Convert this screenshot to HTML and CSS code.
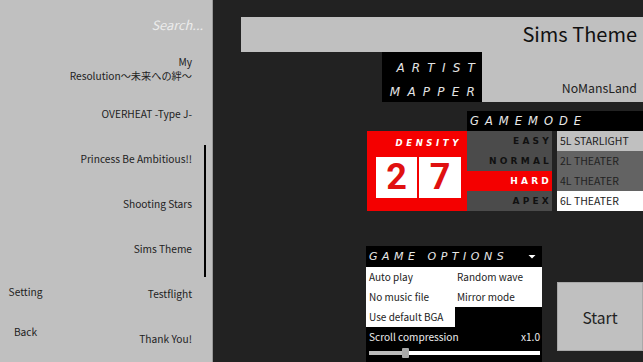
FILE: index.html
```html
<!DOCTYPE html>
<html>
<head>
<meta charset="utf-8">
<link rel="stylesheet" href="styles.css">
</head>
<body>
<div class="app">
  <aside class="sidebar">
    <div class="search">Search...</div>
    <div class="side-body">
      <nav class="nav">
        <div class="nav-item setting">Setting</div>
        <div class="nav-item back">Back</div>
      </nav>
      <ul class="songs">
        <li>My<br>Resolution〜未来への絆〜</li>
        <li>OVERHEAT -Type J-</li>
        <li>Princess Be Ambitious!!</li>
        <li>Shooting Stars</li>
        <li>Sims Theme</li>
        <li>Testflight</li>
        <li>Thank You!</li>
      </ul>
    </div>
    <div class="scroll-thumb"></div>
  </aside>
  <main class="main">
    <div class="title-bar">Sims Theme</div>
    <div class="artist-row">
      <div class="labels">
        <span>ARTIST</span>
        <span>MAPPER</span>
      </div>
      <div class="artist-val">NoMansLand</div>
    </div>
    <div class="mode-grid">
      <div class="gm-head">GAMEMODE</div>
      <div class="density">
        <div class="density-label">DENSITY</div>
        <div class="digits"><span>2</span><span>7</span></div>
      </div>
      <div class="diff">EASY</div><div class="chart easy">5L STARLIGHT</div>
      <div class="diff">NORMAL</div><div class="chart mid">2L THEATER</div>
      <div class="diff hard">HARD</div><div class="chart mid">4L THEATER</div>
      <div class="diff">APEX</div><div class="chart apex">6L THEATER</div>
    </div>
    <div class="bottom-row">
      <section class="options">
        <div class="opt-head"><span>GAME OPTIONS</span>
          <svg class="chev" width="8" height="6" viewBox="0 0 8 6"><path d="M0.5 1 L4 4.5 L7.5 1 Z" fill="#fff"/></svg>
        </div>
        <div class="opt-grid">
          <div class="opt">Auto play</div>
          <div class="opt">Random wave</div>
          <div class="opt">No music file</div>
          <div class="opt">Mirror mode</div>
          <div class="opt single">Use default BGA</div>
        </div>
        <div class="scroll-row"><span>Scroll compression</span><span>x1.0</span></div>
        <div class="slider"><div class="thumb"></div></div>
      </section>
      <button class="start">Start</button>
    </div>
  </main>
</div>
</body>
</html>
```
FILE: styles.css
```css
* { box-sizing: border-box; }
html, body { margin: 0; padding: 0; }
body {
  width: 643px; height: 362px; overflow: hidden;
  background: #222222;
  font-family: "Noto Sans CJK JP", "Noto Sans", sans-serif;
}
.app { display: flex; height: 362px; }
.sidebar {
  position: relative;
  width: 213px; flex: none;
  background: #c0c0c0;
  border-right: 1px solid #9a9a9a;
  color: #222;
}
.search {
  height: 46px;
  padding: 14px 9px 0 0;
  text-align: right;
  font-style: italic;
  font-size: 12.8px;
  color: #ececec;
  line-height: 22px;
}
.side-body { display: flex; }
.nav {
  width: 51px; flex: none;
  display: flex; flex-direction: column; align-items: center;
  padding-top: 238px; gap: 25px;
  font-size: 10.2px;
}
.nav-item { line-height: 15px; white-space: nowrap; }
.songs {
  list-style: none; margin: 0; padding: 0 20px 0 0;
  flex: 1;
  text-align: right;
  font-size: 10.2px;
  line-height: 14px;
}
.songs li {
  height: 45px;
  display: flex; align-items: center; justify-content: flex-end;
}
.scroll-thumb {
  position: absolute; left: 204px; top: 145px;
  width: 2px; height: 132px; background: #000;
}
.main { flex: 1; display: flex; flex-direction: column; }
.title-bar {
  margin: 17px 0 0 28px;
  height: 35px;
  background: #c0c0c0;
  text-align: right;
  padding-right: 6px;
  font-size: 20px;
  line-height: 34px;
  color: #111;
}
.artist-row { display: flex; margin-left: 169px; height: 50px; }
.labels {
  width: 100px; background: #000;
  display: flex; flex-direction: column; align-items: flex-end;
  padding: 4px 0 0 0;
  font-family: "DejaVu Sans", sans-serif;
  font-style: italic;
  font-size: 12px;
  letter-spacing: 7.2px;
  color: #e4e4e4;
  line-height: 24px;
}
.artist-val {
  flex: 1; background: #c0c0c0;
  text-align: right; padding: 27px 6px 0 0;
  font-size: 12.3px; line-height: 18px; color: #222;
}
.mode-grid {
  margin: 9px 0 0 154px;
  display: grid;
  grid-template-columns: 100px 85px 5px 86px;
  grid-template-rows: 20px repeat(4, 20px);
}
.gm-head {
  grid-column: 2 / 5; grid-row: 1;
  background: #000; color: #e8e8e8;
  font-family: "DejaVu Sans", sans-serif;
  font-style: italic; font-size: 11.5px;
  letter-spacing: 6px; line-height: 20px;
  padding-left: 3px; white-space: nowrap;
}
.density {
  grid-column: 1; grid-row: 2 / 6;
  background: #f40000;
  display: flex; flex-direction: column;
  padding: 7px 0 0 9px;
}
.density-label {
  font-family: "DejaVu Sans", sans-serif;
  font-style: italic; font-weight: bold;
  font-size: 8.5px; letter-spacing: 3.6px;
  color: #fff; text-align: right; padding-right: 5px;
  line-height: 11px;
}
.digits { display: flex; gap: 2px; margin-top: 8px; }
.digits span {
  width: 41px; height: 41px; background: #fff;
  color: #e01010; font-family: "Roboto", sans-serif; font-weight: 700;
  font-size: 36px; line-height: 41px; text-align: center;
}
.digits span + span { width: 42px; }
.diff {
  grid-column: 2;
  background: #4b4b4b;
  text-align: right; padding-right: 0;
  font-family: "DejaVu Sans", sans-serif; font-weight: bold;
  font-size: 9px; letter-spacing: 3.2px;
  line-height: 20px; color: #111; white-space: nowrap;
}
.diff.hard { background: #f40000; color: #fff; }
.chart {
  grid-column: 4;
  font-size: 10.5px; line-height: 20px; padding-left: 3px; color: #222;
  white-space: nowrap;
}
.chart.easy { background: #c0c0c0; }
.chart.mid { background: #636363; }
.chart.apex { background: #fff; }
.bottom-row { display: flex; margin: 35px 0 0 153px; align-items: flex-start; }
.options { width: 176px; height: 116px; background: #000; }
.opt-head {
  height: 21px; display: flex; align-items: center; justify-content: space-between;
  padding: 0 6px 0 3px;
  font-family: "DejaVu Sans", sans-serif; white-space: nowrap;
  font-style: italic; font-size: 11px; letter-spacing: 4.5px; color: #e8e8e8;
}
.chev { margin-top: 1px; }
.opt-grid { display: grid; grid-template-columns: 88px 88px; }
.opt {
  background: #fff; height: 20px; line-height: 20px; white-space: nowrap;
  font-size: 10px; color: #222; padding-left: 3px;
}
.opt.single { grid-column: 1; width: 89px; }
.scroll-row {
  display: flex; justify-content: space-between;
  padding: 0 2px 0 3px;
  color: #eee; font-size: 10.1px; line-height: 20px;
}
.slider {
  position: relative;
  margin: 4px 2px 0 3px; height: 4px; background: #fff;
}
.slider::before {
  content: ""; position: absolute; left: 0; top: 0; width: 34px; height: 4px; background: #bbb;
}
.thumb {
  position: absolute; left: 33px; top: -3px; width: 7px; height: 10px; background: #aaa; border-radius: 1px;
}
.start {
  margin: 36px 0 0 15px;
  width: 86px; height: 69px;
  background: #c0c0c0; border: 1px solid #a8a8a8;
  font-family: "Noto Sans CJK JP", "Noto Sans", sans-serif;
  font-size: 15.6px; color: #222;
  padding: 0;
}
```
